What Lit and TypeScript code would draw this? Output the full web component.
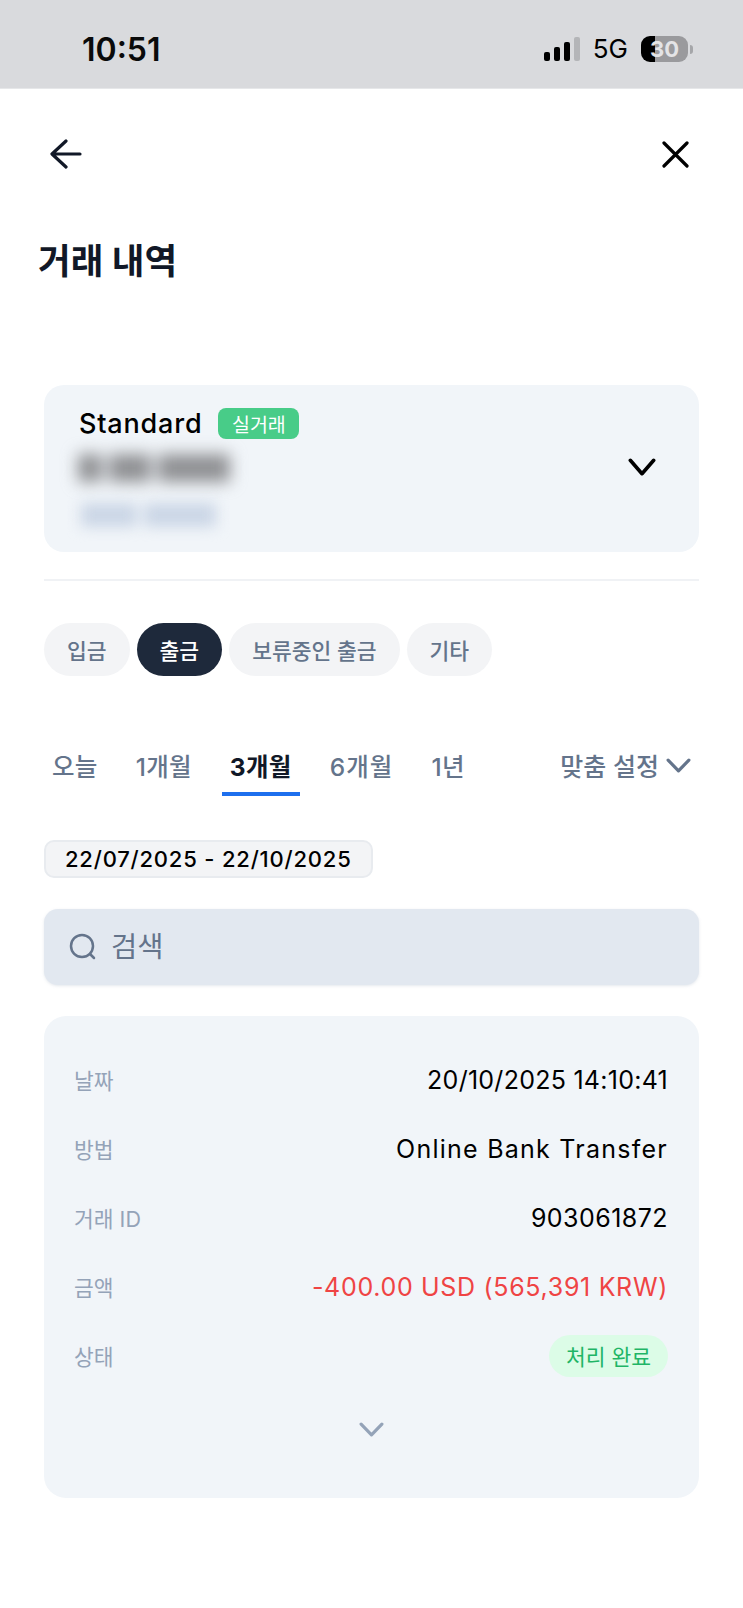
import { LitElement, html, css } from "lit";
import { customElement } from "lit/decorators.js";

const chevron = (w: number, h: number, sw: number) => html`<svg width=${w} height=${h} viewBox="0 0 ${w} ${h}" fill="none" stroke="currentColor" stroke-width=${sw} stroke-linecap="round" stroke-linejoin="round"><path d="M${sw / 2 + 0.5} ${sw / 2 + 0.5} L${w / 2} ${h - sw / 2 - 0.5} L${w - sw / 2 - 0.5} ${sw / 2 + 0.5}"/></svg>`;

@customElement("app-root")
export class AppRoot extends LitElement {
  static styles = css`
    :host { display: block; width: 743px; height: 1608px; background: #fff; overflow: hidden; font-family: Inter, "Noto Sans CJK KR", sans-serif; color: #000; }
    * { box-sizing: border-box; }
    .status { height: 89px; background: #d9dadd; display: flex; align-items: center; padding: 10px 50px 0 82px; border-bottom: 1px solid #e6e7e9; }
    .time { font-size: 32px; font-weight: 600; color: #0a0a0a; flex: 1; line-height: 1; padding-top: 2px; }
    .status-right { display: flex; align-items: center; }
    .signal { display: flex; align-items: flex-end; gap: 4px; height: 24px; }
    .signal i { width: 6px; background: #000; border-radius: 2px; display: block; }
    .signal i.off { background: #b4b5b8; }
    .net { font-size: 26px; font-weight: 400; margin-left: 13px; line-height: 1; }
    .battery { margin-left: 13px; width: 47px; height: 26px; border-radius: 9px; background: linear-gradient(90deg, #000 14px, #9a9a9d 14px); display: flex; align-items: center; justify-content: center; color: #e4e4e6; font-size: 22px; font-weight: 700; line-height: 1; }
    .tip { width: 3px; height: 9px; background: #a5a6a9; border-radius: 0 3px 3px 0; margin-left: 2px; }

    .nav { display: flex; justify-content: space-between; align-items: center; padding: 49px 53px 0 50px; height: 81px; }
    .nav svg { display: block; }
    h1 { margin: 0; padding: 0 0 0 38px; font-size: 35.5px; font-weight: 700; color: #111827; line-height: 44px; margin-top: 70px; }
    .main { padding: 0 44px; }
    .account { margin-top: 101px; height: 167px; border-radius: 20px; background: #f1f5f9; padding: 22px 35px; display: flex; align-items: center; justify-content: space-between; }
    .acc-left { align-self: flex-start; }
    .acc-top { display: flex; align-items: center; gap: 16px; height: 32px; }
    .acc-name { font-size: 27px; font-weight: 500; letter-spacing: 0.8px; }
    .live { background: #48cc88; color: #fff; font-size: 19.5px; height: 31px; width: 81px; border-radius: 8px; display: flex; align-items: center; justify-content: center; }
    .blur1 { display: flex; gap: 7px; margin-top: 15px; filter: blur(8px); height: 28px; margin-left: -1px; }
    .blur1 i { display: block; background: #8f9093; height: 28px; }
    .blur2 { display: flex; gap: 7px; margin-top: 21px; filter: blur(7px); height: 24px; margin-left: 2px; }
    .blur2 i { display: block; background: #cbd6e6; height: 24px; }
    .acc-chev { margin-right: 8px; color: #000; display: block; }
    .divider { height: 2px; background: #f0f2f5; margin-top: 27px; }
    .pills { display: flex; gap: 7px; margin-top: 42px; }
    .pill { height: 53px; border-radius: 27px; background: #f3f4f6; color: #64748b; font-size: 21.5px; display: flex; align-items: center; justify-content: center; padding: 0 23px; font-weight: 500; }
    .pill.on { background: #1e293b; color: #fff; }
    .periods { display: flex; align-items: center; margin-top: 62px; height: 58px; position: relative; color: #64748b; font-size: 24.5px; font-weight: 500; }
    .period { padding: 0 8px; height: 58px; display: flex; align-items: center; margin-right: 22px; border-bottom: 4px solid transparent; white-space: nowrap; letter-spacing: 0.3px; }
    .period.wide { letter-spacing: 1.1px; }
    .period.on { color: #111827; font-weight: 700; border-bottom-color: #1d6fee; }
    .custom { margin-left: auto; display: flex; align-items: center; gap: 7px; padding: 0 8px 4px 0; white-space: nowrap; font-size: 25px; }
    .date { display: inline-flex; align-items: center; height: 38px; margin-top: 44px; padding: 0 19px; border-radius: 10px; border: 2px solid #e8ebef; background: #f3f4f6; font-size: 22px; font-weight: 500; color: #000; letter-spacing: 0.8px; }
    .search { height: 76px; margin-top: 31px; background: #e2e8f0; border-radius: 14px; box-shadow: 0 1px 3px rgba(148,163,184,.25); display: flex; align-items: center; padding: 0 25px; gap: 14px; color: #64748b; font-size: 28.5px; }
    .search span { position: relative; top: -3px; }
    .card { margin-top: 31px; height: 482px; border-radius: 22px; background: #f1f5f9; padding: 29px 31px 0 30px; }
    .row { display: flex; justify-content: space-between; align-items: center; height: 69px; }
    .label { color: #94a3b8; font-size: 21.5px; }
    .value { font-size: 25px; color: #000; white-space: nowrap; }
    .value.red { color: #ef4444; }
    .ok { background: #dcfce7; color: #1fb566; font-size: 21.5px; height: 42px; width: 119px; border-radius: 21px; display: flex; align-items: center; justify-content: center; }
    .more { display: flex; justify-content: center; color: #94a3b8; margin-top: 32px; }
    .more svg { display: block; }
  `;

  render() {
    const rows = [
      ["날짜", "20/10/2025 14:10:41", "", 0.26],
      ["방법", "Online Bank Transfer", "", 1.25],
      ["거래 ID", "903061872", "", 0.45],
      ["금액", "-400.00 USD (565,391 KRW)", "red", 0.68],
    ];
    return html`
      <div class="status">
        <div class="time">10:51</div>
        <div class="status-right">
          <div class="signal">
            <i style="height:9px"></i><i style="height:14px"></i><i style="height:19px"></i><i class="off" style="height:24px"></i>
          </div>
          <div class="net">5G</div>
          <div class="battery">30</div>
          <div class="tip"></div>
        </div>
      </div>
      <div class="nav">
        <svg width="32" height="30" viewBox="0 0 32 30" fill="none" stroke="#111827" stroke-width="3.2" stroke-linecap="round" stroke-linejoin="round"><path d="M30 15H3M16 2 2 15l14 13"/></svg>
        <svg width="29" height="27" viewBox="0 0 29 27" fill="none" stroke="#000" stroke-width="3.2" stroke-linecap="round"><path d="M3 2 26 25M26 2 3 25"/></svg>
      </div>
      <h1>거래 내역</h1>
      <div class="main">
        <div class="account">
          <div class="acc-left">
            <div class="acc-top"><span class="acc-name">Standard</span><span class="live">실거래</span></div>
            <div class="blur1"><i style="width:24px"></i><i style="width:42px"></i><i style="width:72px"></i></div>
            <div class="blur2"><i style="width:56px"></i><i style="width:72px"></i></div>
          </div>
          <span class="acc-chev">${chevron(28, 18, 3.6)}</span>
        </div>
        <div class="divider"></div>
        <div class="pills">
          <div class="pill">입금</div>
          <div class="pill on">출금</div>
          <div class="pill">보류중인 출금</div>
          <div class="pill">기타</div>
        </div>
        <div class="periods">
          <div class="period">오늘</div>
          <div class="period">1개월</div>
          <div class="period on">3개월</div>
          <div class="period wide">6개월</div>
          <div class="period">1년</div>
          <div class="custom">맞춤 설정 ${chevron(25, 15, 3.2)}</div>
        </div>
        <div class="date">22/07/2025 - 22/10/2025</div>
        <div class="search">
          <svg width="28" height="28" viewBox="0 0 28 28" fill="none" stroke="#64748b" stroke-width="2.5" stroke-linecap="round"><circle cx="13" cy="13" r="11"/><path d="M21 21l4 4"/></svg>
          <span>검색</span>
        </div>
        <div class="card">
          ${rows.map(([l, v, c, ls]) => html`<div class="row"><span class="label">${l}</span><span class="value ${c}" style="letter-spacing:${ls}px">${v}</span></div>`)}
          <div class="row"><span class="label">상태</span><span class="ok">처리 완료</span></div>
          <div class="more">${chevron(25, 15, 3.2)}</div>
        </div>
      </div>
    `;
  }
}
